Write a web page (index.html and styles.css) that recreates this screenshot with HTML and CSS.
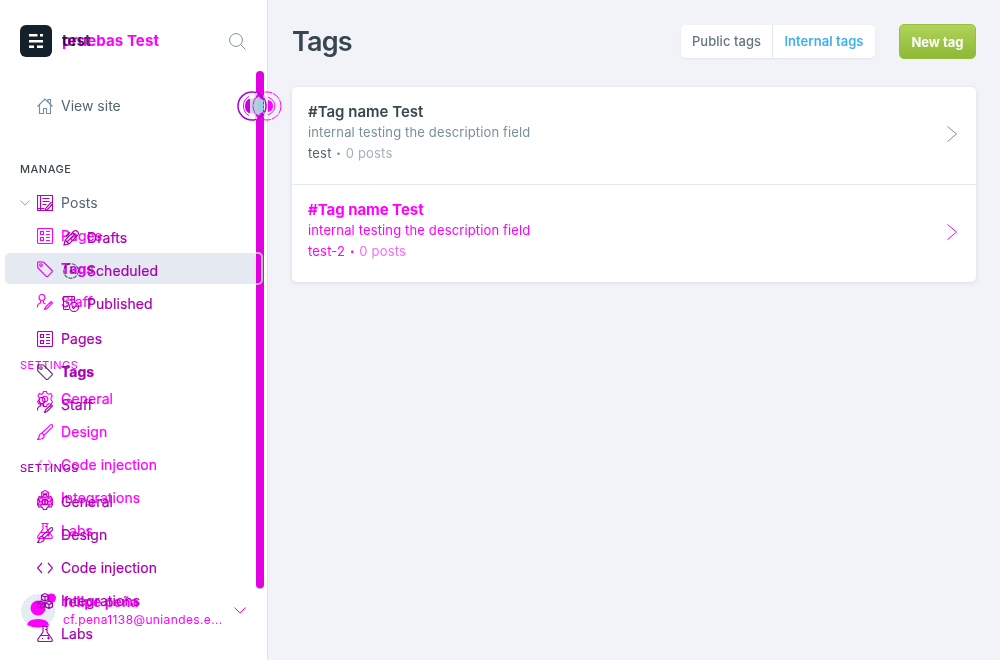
FILE: index.html
```html
<!DOCTYPE html>
<html lang="en">
<head>
<meta charset="utf-8">
<title>Tags</title>
<link rel="stylesheet" href="styles.css">
</head>
<body>
<svg class="defs" width="0" height="0">
  <symbol id="home" viewBox="0 0 16 16"><path d="M.5 8.500 8 1l7.500 7.500M2.500 7v8.500h4v-5h3v5h4V7M11 3.500v-2h2.500V6"/></symbol>
  <symbol id="posts" viewBox="0 0 16 16"><path d="M.5.5h15v15H.5zM3.500.5v15M5.500 3.500h7M5.500 6.500h7M5.500 9.500h4M.5 13.500h7M14.500 7 9 13l-1 2.500 2.500-1 5-5.500"/></symbol>
  <symbol id="pages" viewBox="0 0 16 16"><rect x=".5" y=".5" width="15" height="15" rx="1"/><path d="M3.500 3.500h3v3h-3zM3.500 9.500h3v3h-3zM9 3.500h4M9 6.500h4M9 9.500h4M9 12.500h4"/></symbol>
  <symbol id="tag" viewBox="0 0 16 16"><path d="M.7 1.700v5l8.500 8.600q.8.700 1.600 0l4.200-4.200q.8-.8 0-1.600L6.500 1 1.500.7q-.8 0-.8 1z"/><circle cx="4" cy="4" r="1.300"/></symbol>
  <symbol id="staff" viewBox="0 0 16 16"><circle cx="5" cy="3.500" r="3"/><path d="M.5 13.500v-2q.5-2 3-2.500v-2.500M6.500 6.500V9l2 1M14 7.500l1.500 1.500-5.500 5.500-2.500 1 1-2.500zM12.500 9l1.500 1.500"/></symbol>
  <symbol id="pencil" viewBox="0 0 16 16"><path d="M1 15l1.200-5L11 1q2-1 3.500.5T15 5l-9 9zM2.200 10 6 14M9.500 2.500l4 4M4 12l8-8M3 6 7 2"/></symbol>
  <symbol id="clock" viewBox="0 0 16 16"><circle cx="8" cy="8" r="7.300" stroke-dasharray="4 1"/><path d="M8 3.500V8l3 2"/></symbol>
  <symbol id="published" viewBox="0 0 16 16"><path d="M6 13.500H1.500q-1 0-1-1v-11q0-1 1-1h9q1 0 1 1V6M3 4h6M3 7h3M3 10h2"/><circle cx="11" cy="11" r="4.500"/><path d="m9 11 1.500 1.500 3-3"/></symbol>
  <symbol id="gear" viewBox="0 0 16 16"><path d="m6.500.5-.6 2-1.500.8L2.300 2.500 1 5l1.300 1.600v2L.5 10.500l1.500 2.600 2.200-.3 1.400.9.9 1.800h3l.7-2 1.500-.8 2.300.5 1.500-2.500-1.500-1.900V6.700L15.300 5l-1.500-2.600-2.200.8-1.500-.8-.6-1.900z"/><circle cx="8" cy="8" r="2.800"/></symbol>
  <symbol id="brush" viewBox="0 0 16 16"><path d="M5 9 13.500.9q1.200-.7 2 .2t-.2 2L7 11.500zM5 9l2.200 2.500q0 3-3 3.500L.5 15.500l1.500-2q-.2-3.500 3-4.500"/></symbol>
  <symbol id="code" viewBox="0 0 16 16"><path d="M5 3 .5 8 5 13M11 3l4.500 5L11 13"/></symbol>
  <symbol id="blocks" viewBox="0 0 16 16"><path d="m8 .5 3.500 1.800v4L8 8 4.500 6.300v-4zM4.500 2.300 8 4l3.500-1.700M8 4v4M4 8l3.500 1.800v4L4 15.500.5 13.800v-4zM.5 9.800 4 11.500l3.500-1.700M4 11.500v4M12 8l3.500 1.800v4L12 15.500l-3.500-1.700v-4zM8.500 9.800l3.500 1.700 3.500-1.700M12 11.500v4"/></symbol>
  <symbol id="flask" viewBox="0 0 16 16"><path d="M4.500.5h7M6 .5V6l-5 7q-1 2.500 1.500 2.500h11q2.500 0 1.500-2.500l-5-7V.5M3.500 9.500h9M8 3.500h2M5 12.500h1M10 12h3M11.500 10.500v3"/></symbol>
  <symbol id="down" viewBox="0 0 12 7"><path d="m.5.5 5.500 5.500L11.500.5"/></symbol>
  <symbol id="right" viewBox="0 0 10 16"><path d="m.5.5 9 7.500-9 7.500"/></symbol>
</svg>
<div class="app">
  <aside class="sidebar">
    <div class="active-row"></div>
    <div class="layer base">
      <header class="brand">
        <svg class="logo" viewBox="0 0 32 32"><rect width="32" height="32" rx="6" fill="#15212a"/><path d="M9 9h8.500v2.500H9zM20 9h3v2.500h-3zM9 15h14v2.500H9zM9 20.500h5V23H9zM17 20.500h6V23h-6z" fill="#fff"/></svg>
        <span class="site dark">test</span>
        <svg class="search" viewBox="0 0 17 17"><circle cx="7" cy="7" r="6.400"/><path d="m11.500 11.500 5 5"/></svg>
      </header>
      <nav>
        <a class="item gray view"><svg class="icon slate"><use href="#home"/></svg>View site</a>
        <h2 class="gray">Manage</h2>
        <a class="item gray parent"><svg class="caret"><use href="#down"/></svg><svg class="icon purple"><use href="#posts"/></svg>Posts</a>
        <div class="subnav">
          <a class="item"><svg class="icon"><use href="#pencil"/></svg>Drafts</a>
          <a class="item"><svg class="icon gray"><use href="#clock"/></svg>Scheduled</a>
          <a class="item"><svg class="icon"><use href="#published"/></svg>Published</a>
        </div>
        <a class="item"><svg class="icon"><use href="#pages"/></svg>Pages</a>
        <a class="item bold"><svg class="icon deep"><use href="#tag"/></svg>Tags</a>
        <a class="item"><svg class="icon"><use href="#staff"/></svg>Staff</a>
        <h2 class="settings">Settings</h2>
        <a class="item"><svg class="icon"><use href="#gear"/></svg>General</a>
        <a class="item"><svg class="icon"><use href="#brush"/></svg>Design</a>
        <a class="item"><svg class="icon"><use href="#code"/></svg>Code injection</a>
        <a class="item"><svg class="icon"><use href="#blocks"/></svg>Integrations</a>
        <a class="item"><svg class="icon"><use href="#flask"/></svg>Labs</a>
      </nav>
    </div>
    <div class="layer ghost">
      <header class="brand"><span class="site">pruebas Test</span></header>
      <nav>
        <a class="item"><svg class="icon"><use href="#pages"/></svg>Pages</a>
        <a class="item bold"><svg class="icon"><use href="#tag"/></svg>Tags</a>
        <a class="item"><svg class="icon"><use href="#staff"/></svg>Staff</a>
        <h2 class="settings">Settings</h2>
        <a class="item"><svg class="icon"><use href="#gear"/></svg>General</a>
        <a class="item"><svg class="icon"><use href="#brush"/></svg>Design</a>
        <a class="item"><svg class="icon faint"><use href="#code"/></svg>Code injection</a>
        <a class="item"><svg class="icon"><use href="#blocks"/></svg>Integrations</a>
        <a class="item"><svg class="icon"><use href="#flask"/></svg>Labs</a>
      </nav>
      <footer class="user">
        <svg class="avatar" viewBox="0 0 36 36"><circle cx="17" cy="18" r="16.500" fill="#e5ecf3" stroke="#d7e0e8" stroke-dasharray="2 2"/><circle cx="17" cy="15" r="7.500" fill="#f0f"/><path d="M6 32q1-6 11-6t11 6q-11 5-22 0z" fill="#f0f"/><circle cx="30.500" cy="5" r="4.500" fill="#f0f"/></svg>
        <div class="who"><strong>felipe peña</strong><span>cf.pena1138@uniandes.e...</span></div>
        <svg class="open"><use href="#down"/></svg>
      </footer>
    </div>
    <div class="scrollbar"></div>
    <div class="row-end"></div>
    <svg class="switch" viewBox="0 0 46 32">
      <ellipse cx="17" cy="16" rx="7.500" ry="8" fill="#d5d5d8"/>
      <path d="M13 8.500Q8 10 8 16t5 7.500z" fill="#c400e8"/>
      <path d="M17 8q-5 8 0 16 5 1 9-2V10q-4-3-9-2" fill="#9fcfe8"/>
      <path d="M22 7q-6 9 0 18" stroke="#c9c9cc" stroke-width="2"/>
      <path d="M31 10q5 1 5 6t-5 6z" fill="#f0f"/>
      <circle cx="15" cy="16" r="14" stroke="#a900dc" stroke-width="1.500"/>
      <path d="M12 6.500Q6.500 9 6.500 16t5.500 9.500M31 7q7 3 7 9t-7 9" stroke="#f0f"/>
      <path d="M20 3q-4 6-4 13t4 13M27 5l2 4M27 27l2-4" stroke="#d8d8db" stroke-width="1.500"/>
      <circle cx="30" cy="16" r="14" stroke="#f0f" stroke-dasharray="8 1"/>
      <path d="M27 6v20" stroke="#e3d9ea" stroke-dasharray="2 2"/>
    </svg>
  </aside>
  <main class="content">
    <header class="toolbar">
      <h1>Tags</h1>
      <div class="tabs"><button>Public tags</button><button class="on">Internal tags</button></div>
      <button class="new">New tag</button>
    </header>
    <section class="list">
      <article class="entry">
        <div class="text"><h3>#Tag name Test</h3><p>internal testing the description field</p><div class="meta"><b>test</b><i>•</i><span>0 posts</span></div></div>
        <svg class="arrow"><use href="#right"/></svg>
      </article>
      <article class="entry changed">
        <div class="text"><h3>#Tag name Test</h3><p>internal testing the description field</p><div class="meta"><b>test-2</b><i>•</i><span>0 posts</span></div></div>
        <svg class="arrow"><use href="#right"/></svg>
      </article>
    </section>
  </main>
</div>
</body>
</html>
```
FILE: styles.css
```css
* { box-sizing: border-box; }
body { margin: 0; font-family: Inter, "Open Sans", sans-serif; font-size: 14px; background: #f2f3f8; }
h1, h2, h3, p { margin: 0; }
button { font: inherit; border: 0; padding: 0; }
svg { fill: none; stroke: currentColor; stroke-width: 1; flex: none; }
.defs { position: absolute; }
.app { display: flex; height: 660px; overflow: hidden; }

.sidebar { position: relative; width: 268px; flex: none; background: #fff; border-right: 1px solid #dfe4ec; }
.layer { position: absolute; inset: 0; overflow: hidden; }
.base { color: #a900b0; }
.ghost { color: #f0f; mix-blend-mode: multiply; }
.active-row { position: absolute; left: 5px; top: 253px; width: 257px; height: 31px; border-radius: 5px; background: #e5e9f1; }
.brand { display: flex; align-items: center; height: 82px; padding: 0 21px 0 20px; }
.ghost .brand { padding-left: 62px; }
.logo { width: 32px; height: 32px; margin-right: 10px; stroke: none; }
.site { flex: 1; padding-bottom: 2px; font-size: 15px; font-weight: 700; letter-spacing: .1px; }
.dark { color: #3f3a4c; }
.search { width: 17px; height: 17px; color: #7c919b; }
.item { display: flex; align-items: center; height: 33px; padding: 0 0 2px 37px; font-size: 14px; letter-spacing: .07px; -webkit-text-stroke: .2px currentColor; }
.icon { width: 16px; height: 16px; margin: 2px 8px 0 0; overflow: visible; stroke-width: 1.150; }
.gray { color: #53656d; -webkit-text-stroke: 0; }
.slate { color: #78909c; }
.purple { color: #b500bd; }
.deep { color: #653b6e; }
.faint { opacity: .55; }
.bold { font-weight: 700; letter-spacing: 0; }
.view { margin-top: 7.500px; letter-spacing: 0; }
h2 { height: 16px; padding-left: 20px; font-size: 11px; line-height: 16px; font-weight: 500; letter-spacing: .5px; text-transform: uppercase; }
.base h2.gray { margin: 38.500px 0 9.500px; color: #3c484e; }
.parent { padding-left: 20px; }
.caret { width: 10px; height: 6px; margin: 2px 7px 0 0; color: #9a829f; }
.subnav { margin: 2px 0; }
.subnav .item { padding-left: 63px; }
.base .settings { margin: 38.500px 0 9.500px; }
.ghost nav { padding-top: 137.500px; }
.ghost .settings { margin: 38.500px 0 9.500px; font-weight: 400; }
.user { display: flex; align-items: center; height: 46px; margin-top: 40px; padding: 0 21px; }
.avatar { width: 36px; height: 36px; margin-right: 6px; stroke: none; }
.who { display: flex; flex-direction: column; flex: 1; white-space: nowrap; }
.who strong { font-size: 14px; line-height: 18px; }
.who span { font-size: 12px; line-height: 18px; letter-spacing: .37px; }
.open { width: 12px; height: 7px; }
.scrollbar { position: absolute; left: 256px; top: 71px; width: 8px; height: 518px; border-radius: 4px; background: #e000e0; border-bottom: 1px solid #c5a9c5; }
.row-end { position: absolute; left: 256px; top: 252px; width: 7px; height: 33px; border: 2px solid #bdbdbd; border-left: 0; border-radius: 0 5px 5px 0; }
.switch { position: absolute; left: 237px; top: 90px; width: 46px; height: 32px; z-index: 2; stroke: none; }

.content { flex: 1; padding: 0 24px; }
.toolbar { display: flex; align-items: center; height: 83px; }
h1 { flex: 1; font-size: 27px; font-weight: 600; letter-spacing: -.8px; color: #37474f; }
.tabs { display: flex; height: 33px; border-radius: 5px; overflow: hidden; background: #fff; box-shadow: 0 1px 2px rgba(40,60,90,.08); }
.tabs button { width: 91px; padding-bottom: 1px; background: #fff; color: #66777f; font-size: 13px; font-weight: 500; letter-spacing: .05px; }
.tabs .on { width: 103px; border-left: 1px solid #dfe8f1; color: #3eb0ef; font-weight: 600; }
.new { width: 77px; height: 35px; margin-left: 24px; border: 1px solid #97c03c; border-radius: 5px; background: linear-gradient(#aed45a, #8fb835); color: #fff; font-size: 13px; font-weight: 700; letter-spacing: 0; }
.list { margin-top: 4px; border-radius: 5px; background: #fff; box-shadow: 0 1px 4px rgba(60,80,110,.14); }
.entry { display: flex; align-items: center; height: 97px; padding: 0 19px 0 16px; color: #78909c; }
.entry + .entry { height: 98px; border-top: 1px solid #e3ebf2; }
.text { flex: 1; margin-top: -6px; }
h3 { font-size: 15px; line-height: 20px; font-weight: 600; letter-spacing: 0; color: #37474f; }
.entry p { font-size: 13px; line-height: 21px; letter-spacing: .14px; }
.meta { display: flex; align-items: center; font-size: 13px; line-height: 21px; letter-spacing: .2px; }
.meta b { font-weight: 400; color: #53656d; }
.meta i { width: 14px; font-size: 8px; font-style: normal; text-align: center; }
.meta span { color: #9fb1bb; }
.arrow { width: 10px; height: 16px; margin-top: -3px; }
.changed, .changed h3, .changed .meta b, .changed .meta span { color: #f0f; }
.changed .meta span { color: #f56cf5; }
.changed h3 { font-weight: 700; letter-spacing: -.05px; }
```
